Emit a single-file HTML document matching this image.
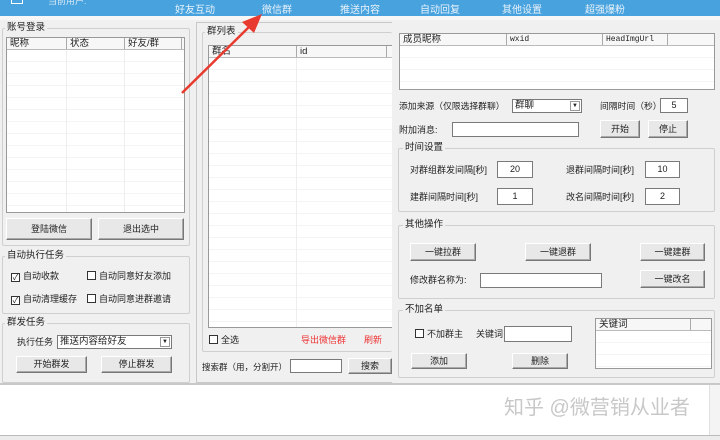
<!DOCTYPE html><html><head><meta charset="utf-8"><style>
*{box-sizing:border-box;margin:0;padding:0}
body{width:720px;height:440px;background:#f0f0f0;font-family:"Liberation Sans","Noto Sans CJK SC",sans-serif;font-size:9px;color:#222;position:relative;overflow:hidden}
.a{position:absolute}
.t{position:absolute;white-space:nowrap;font-size:9px;line-height:12px}
.grp{position:absolute;border:1px solid #cfcfcf;border-radius:2px}
.gt{position:absolute;top:-7px;left:4px;background:#f0f0f0;padding:0 2px;font-size:9.5px;line-height:12px}
.lv{position:absolute;background:#fff;border:1px solid #828282;overflow:hidden;background-image:repeating-linear-gradient(#fff 0 11px,#f4f4f4 11px 12px)}
.hd{position:absolute;left:0;right:0;top:0;height:12px;background:#f7f7f7;border-bottom:1px solid #bbb;font-size:9.5px;line-height:11px}
.hd span{position:absolute;top:0;border-right:1px solid #aaa;height:11px;padding-left:3px}
.btn{position:absolute;background:#e8e8e8;border:1px solid #fff;border-right-color:#777;border-bottom-color:#777;box-shadow:inset -1px -1px 0 #aaa;text-align:center;font-size:9px}
.inp{position:absolute;background:#fff;border:1px solid #7a7a7a;font-size:9px;text-align:center}
.cb{display:inline-block;width:9px;height:9px;border:1px solid #333;background:#fff;vertical-align:-1px;margin-right:3px;font-size:8px;line-height:7px;text-align:center}
.nav{position:absolute;top:1px;color:#e8f2fb;font-size:10px}
</style></head><body>
<div class="a" style="left:0;top:0;width:720px;height:16px;background:#47a2de"></div>
<div class="a" style="left:0;top:16px;width:720px;height:4px;background:#f7f7f7"></div>
<div class="a" style="left:11px;top:-4px;width:12px;height:8px;border:1px solid #fff"></div>
<div class="t" style="left:48px;top:-5px;color:#dbeaf7">当前用户:</div>
<div class="nav" style="left:175px">好友互动</div>
<div class="nav" style="left:262px">微信群</div>
<div class="nav" style="left:340px">推送内容</div>
<div class="nav" style="left:420px">自动回复</div>
<div class="nav" style="left:502px">其他设置</div>
<div class="nav" style="left:585px">超强爆粉</div>

<div class="grp" style="left:2px;top:28px;width:188px;height:218px"><div class="gt" style="left:2px">账号登录</div></div>
<div class="lv" style="left:6px;top:37px;width:179px;height:176px;border-color:#999"><div class="hd"><span style="left:0;width:60px">昵称</span><span style="left:60px;width:58px">状态</span><span style="left:118px;width:57px">好友/群</span></div>
<div class="a" style="left:59px;top:12px;width:1px;height:170px;background:#eee"></div><div class="a" style="left:117px;top:12px;width:1px;height:170px;background:#eee"></div></div>
<div class="btn" style="left:6px;top:218px;width:86px;height:22px;line-height:20px">登陆微信</div>
<div class="btn" style="left:98px;top:218px;width:86px;height:22px;line-height:20px">退出选中</div>

<div class="grp" style="left:2px;top:256px;width:188px;height:58px"><div class="gt" style="left:2px">自动执行任务</div></div>
<div class="t" style="left:11px;top:270px"><span class="cb">✓</span>自动收款</div>
<div class="t" style="left:87px;top:270px"><span class="cb"></span>自动同意好友添加</div>
<div class="t" style="left:11px;top:293px"><span class="cb">✓</span>自动清理缓存</div>
<div class="t" style="left:87px;top:293px"><span class="cb"></span>自动同意进群邀请</div>

<div class="grp" style="left:2px;top:323px;width:188px;height:60px"><div class="gt" style="left:2px">群发任务</div></div>
<div class="t" style="left:17px;top:336px">执行任务</div>
<div class="inp" style="left:57px;top:335px;width:115px;height:14px;text-align:left;font-size:9.5px;line-height:12px;padding-left:2px">推送内容给好友<span style="position:absolute;right:1px;top:1px;width:10px;height:10px;border:1px solid #999;font-size:6px;line-height:8px;text-align:center">▼</span></div>
<div class="btn" style="left:16px;top:356px;width:71px;height:17px;line-height:15px">开始群发</div>
<div class="btn" style="left:101px;top:356px;width:71px;height:17px;line-height:15px">停止群发</div>

<div class="a" style="left:196px;top:22px;width:196px;height:361px;border:1px solid #c8c8c8;border-right:none"></div>
<div class="grp" style="left:202px;top:32px;width:190px;height:320px;border-right:none"><div class="gt" style="left:2px">群列表</div></div>
<div class="lv" style="left:208px;top:45px;width:184px;height:283px;border-color:#999;border-right:none"><div class="hd"><span style="left:0;width:88px">群名</span><span style="left:88px;width:90px">id</span></div>
<div class="a" style="left:87px;top:12px;width:1px;height:280px;background:#eee"></div></div>
<div class="t" style="left:209px;top:334px"><span class="cb"></span>全选</div>
<div class="t" style="left:301px;top:334px;color:#e33">导出微信群</div>
<div class="t" style="left:364px;top:334px;color:#e33">刷新</div>
<div class="t" style="left:202px;top:361px;font-size:8.5px">搜索群（用，分割开）</div>
<div class="inp" style="left:290px;top:359px;width:52px;height:14px"></div>
<div class="btn" style="left:348px;top:358px;width:44px;height:16px;line-height:14px">搜索</div>

<div class="lv" style="left:399px;top:33px;width:316px;height:57px;border-color:#999"><div class="hd"><span style="left:0;width:107px">成员昵称</span><span style="left:107px;width:96px;font-family:'Liberation Mono',monospace;font-size:8px">wxid</span><span style="left:203px;width:65px;font-family:'Liberation Mono',monospace;font-size:8px">HeadImgUrl</span></div></div>
<div class="t" style="left:399px;top:100px;font-size:8.8px">添加来源（仅限选择群聊）</div>
<div class="inp" style="left:512px;top:99px;width:70px;height:14px;text-align:left;font-size:9.5px;line-height:12px;padding-left:2px">群聊<span style="position:absolute;right:1px;top:1px;width:10px;height:10px;border:1px solid #999;font-size:6px;line-height:8px;text-align:center">▼</span></div>
<div class="t" style="left:600px;top:100px;font-size:8.8px">间隔时间（秒）</div>
<div class="inp" style="left:660px;top:98px;width:28px;height:15px;line-height:13px">5</div>
<div class="t" style="left:399px;top:124px">附加消息:</div>
<div class="inp" style="left:452px;top:122px;width:127px;height:15px"></div>
<div class="btn" style="left:600px;top:120px;width:40px;height:18px;line-height:16px">开始</div>
<div class="btn" style="left:648px;top:120px;width:40px;height:18px;line-height:16px">停止</div>

<div class="grp" style="left:398px;top:148px;width:317px;height:64px"><div class="gt">时间设置</div></div>
<div class="t" style="left:410px;top:164px">对群组群发间隔[秒]</div>
<div class="inp" style="left:497px;top:161px;width:36px;height:17px;line-height:15px">20</div>
<div class="t" style="left:566px;top:164px">退群间隔时间[秒]</div>
<div class="inp" style="left:645px;top:161px;width:35px;height:17px;line-height:15px">10</div>
<div class="t" style="left:410px;top:191px">建群间隔时间[秒]</div>
<div class="inp" style="left:497px;top:188px;width:36px;height:17px;line-height:15px">1</div>
<div class="t" style="left:566px;top:191px">改名间隔时间[秒]</div>
<div class="inp" style="left:645px;top:188px;width:35px;height:17px;line-height:15px">2</div>

<div class="grp" style="left:398px;top:225px;width:317px;height:74px"><div class="gt">其他操作</div></div>
<div class="btn" style="left:410px;top:243px;width:66px;height:18px;line-height:16px">一键拉群</div>
<div class="btn" style="left:525px;top:243px;width:66px;height:18px;line-height:16px">一键退群</div>
<div class="btn" style="left:640px;top:243px;width:65px;height:18px;line-height:16px">一键建群</div>
<div class="t" style="left:410px;top:274px">修改群名称为:</div>
<div class="inp" style="left:480px;top:273px;width:122px;height:15px"></div>
<div class="btn" style="left:640px;top:270px;width:65px;height:18px;line-height:16px">一键改名</div>

<div class="grp" style="left:398px;top:310px;width:317px;height:68px"><div class="gt">不加名单</div></div>
<div class="t" style="left:415px;top:328px"><span class="cb"></span>不加群主</div>
<div class="t" style="left:476px;top:328px">关键词</div>
<div class="inp" style="left:504px;top:326px;width:68px;height:16px"></div>
<div class="lv" style="left:595px;top:318px;width:117px;height:51px;border-color:#999"><div class="hd"><span style="left:0;width:95px">关键词</span></div></div>
<div class="btn" style="left:411px;top:353px;width:56px;height:16px;line-height:14px">添加</div>
<div class="btn" style="left:512px;top:353px;width:56px;height:16px;line-height:14px">删除</div>

<div class="a" style="left:0;top:383px;width:720px;height:2px;background:#c8c8c8"></div>
<div class="a" style="left:0;top:385px;width:720px;height:50px;background:#fff"></div>
<div class="a" style="left:709px;top:385px;width:11px;height:50px;background:#f4f4f4;border-left:1px solid #e0e0e0"></div>
<div class="a" style="left:0;top:435px;width:720px;height:5px;background:#ececec;border-top:1px solid #bbb"></div>
<div class="t" style="left:504px;top:396px;font-size:20px;line-height:24px;color:#c8c8c8">知乎 @微营销从业者</div>

<svg class="a" style="left:0;top:0" width="720" height="440"><line x1="182" y1="93" x2="250" y2="26" stroke="#e83a2e" stroke-width="2.5"/><polygon points="262,14 242,22 254,33" fill="#e83a2e"/></svg>
</body></html>
